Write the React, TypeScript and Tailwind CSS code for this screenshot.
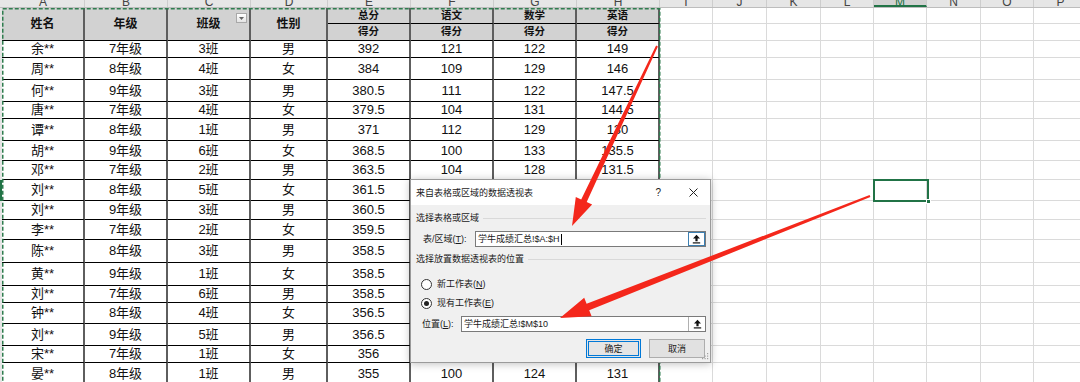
import React from "react";

const COLS = [
  { k: "A", w: "w-[83px]" },
  { k: "B", w: "w-[83px]" },
  { k: "C", w: "w-[83px]" },
  { k: "D", w: "w-[77px]" },
  { k: "E", w: "w-[83px]" },
  { k: "F", w: "w-[83px]" },
  { k: "G", w: "w-[83px]" },
  { k: "H", w: "w-[83px]" },
];
const EXTRA = [
  { k: "I", w: "w-[53px]" },
  { k: "J", w: "w-[54px]" },
  { k: "K", w: "w-[54px]" },
  { k: "L", w: "w-[53px]" },
  { k: "M", w: "w-[53px]" },
  { k: "N", w: "w-[54px]" },
  { k: "O", w: "w-[53px]" },
  { k: "P", w: "w-[54px]" },
];

type Row = { h: string; v: string[] };
const ROWS: Row[] = [
  { h: "h-[17px]", v: ["余**", "7年级", "3班", "男", "392", "121", "122", "149"] },
  { h: "h-[22px]", v: ["周**", "8年级", "4班", "女", "384", "109", "129", "146"] },
  { h: "h-[22px]", v: ["何**", "9年级", "3班", "男", "380.5", "111", "122", "147.5"] },
  { h: "h-[17px]", v: ["唐**", "7年级", "4班", "女", "379.5", "104", "131", "144.5"] },
  { h: "h-[22px]", v: ["谭**", "8年级", "1班", "男", "371", "112", "129", "130"] },
  { h: "h-[20px]", v: ["胡**", "9年级", "6班", "女", "368.5", "100", "133", "135.5"] },
  { h: "h-[19px]", v: ["邓**", "7年级", "2班", "男", "363.5", "104", "128", "131.5"] },
  { h: "h-[21px]", v: ["刘**", "8年级", "5班", "女", "361.5", "106", "125", "130.5"] },
  { h: "h-[19px]", v: ["刘**", "9年级", "3班", "男", "360.5", "102", "130", "128.5"] },
  { h: "h-[20px]", v: ["李**", "7年级", "2班", "女", "359.5", "108", "121", "130.5"] },
  { h: "h-[23px]", v: ["陈**", "8年级", "3班", "男", "358.5", "101", "127", "130.5"] },
  { h: "h-[23px]", v: ["黄**", "9年级", "1班", "女", "358.5", "110", "119", "129.5"] },
  { h: "h-[17px]", v: ["刘**", "7年级", "6班", "男", "358.5", "99", "131", "128.5"] },
  { h: "h-[21px]", v: ["钟**", "8年级", "4班", "女", "356.5", "107", "120", "129.5"] },
  { h: "h-[22px]", v: ["刘**", "9年级", "5班", "男", "356.5", "103", "126", "127.5"] },
  { h: "h-[17px]", v: ["宋**", "7年级", "1班", "女", "356", "105", "123", "128"] },
  { h: "h-[22px]", v: ["晏**", "8年级", "1班", "男", "355", "100", "124", "131"] },
];

const TBL = "shrink-0 border-r-2 border-r-[#5e5e5e] border-b border-b-black";
const GRID = "shrink-0 border-r border-r-[#dadada] border-b border-b-[#dadada]";

function RefButton({ focused }: { focused?: boolean }) {
  return (
    <div
      className={`w-[17px] h-full shrink-0 flex items-center justify-center bg-white border-l ${
        focused ? "border-[#3c7fb1] border" : "border-l-[#b0b0b0]"
      }`}
    >
      <svg width="9" height="10" viewBox="0 0 9 10">
        <path d="M4.5 0.8 L8 4.6 L5.6 4.6 L5.6 7.2 L3.4 7.2 L3.4 4.6 L1 4.6 Z" fill="#111" />
        <rect x="0.8" y="8.3" width="7.4" height="1.2" fill="#111" />
      </svg>
    </div>
  );
}

function Radio({ checked }: { checked?: boolean }) {
  return (
    <div className="w-[11px] h-[11px] rounded-full border border-[#333] bg-white flex items-center justify-center shrink-0">
      {checked && <div className="w-[5px] h-[5px] rounded-full bg-[#222]" />}
    </div>
  );
}

function Dialog() {
  return (
    <div className="absolute left-[410px] top-[179px] w-[301px] h-[184px] border border-[#9a9a9a] bg-[#f0f0f0] shadow-[0_1px_8px_rgba(0,0,0,0.25)] text-[9px] text-[#1a1a1a] font-['Liberation_Sans','Noto_Sans_CJK_SC',sans-serif]">
      <div className="h-[25px] bg-white flex items-center pl-[5px] pr-[12px]">
        <span className="leading-[12px]">来自表格或区域的数据透视表</span>
        <span className="ml-auto text-[10px] leading-[12px]">?</span>
        <svg className="ml-[28px]" width="9" height="9" viewBox="0 0 9 9">
          <path d="M0.5 0.5 L8.5 8.5 M8.5 0.5 L0.5 8.5" stroke="#222" strokeWidth="1" />
        </svg>
      </div>
      <div className="pl-[5px] pr-[4px]">
        <div className="mt-[7px] h-[12px] flex items-center">
          <span className="leading-[12px]">选择表格或区域</span>
          <div className="flex-1 h-px bg-[#d9d9d9] ml-[4px]" />
        </div>
        <div className="mt-[7px] h-[16px] flex items-center pl-[7px]">
          <span className="w-[52px] leading-[12px]">
            表/区域(<span className="underline">T</span>):
          </span>
          <div className="flex-1 h-full flex border border-[#7a7a7a] bg-white">
            <div className="flex-1 flex items-center pl-[2px] leading-[12px]">
              学牛成绩汇总!$A:$H<span className="w-px h-[11px] bg-black ml-[1px]" />
            </div>
            <RefButton focused />
          </div>
        </div>
        <div className="mt-[6px] h-[12px] flex items-center">
          <span className="leading-[12px]">选择放置数据透视表的位置</span>
          <div className="flex-1 h-px bg-[#d9d9d9] ml-[4px]" />
        </div>
        <div className="mt-[12px] h-[14px] flex items-center pl-[5px] gap-[5px]">
          <Radio />
          <span className="leading-[12px]">
            新工作表(<span className="underline">N</span>)
          </span>
        </div>
        <div className="mt-[5px] h-[14px] flex items-center pl-[5px] gap-[5px]">
          <Radio checked />
          <span className="leading-[12px]">
            现有工作表(<span className="underline">E</span>)
          </span>
        </div>
        <div className="mt-[6px] h-[16px] flex items-center pl-[6px]">
          <span className="w-[39px] leading-[12px]">
            位置(<span className="underline">L</span>):
          </span>
          <div className="flex-1 h-full flex border border-[#7a7a7a] bg-white">
            <div className="flex-1 flex items-center pl-[2px] leading-[12px]">学牛成绩汇总!$M$10</div>
            <RefButton />
          </div>
        </div>
        <div className="mt-[7px] flex justify-end gap-[8px] pr-[1px]">
          <div className="w-[55px] h-[19px] border border-[#0078d7] bg-[#e5e5e5] flex items-center justify-center">
            <div className="w-[51px] h-[15px] border border-[#0078d7] flex items-center justify-center leading-[12px]">
              确定
            </div>
          </div>
          <div className="w-[56px] h-[19px] border border-[#adadad] bg-[#e1e1e1] flex items-center justify-center leading-[12px]">
            取消
          </div>
        </div>
      </div>
      <svg className="absolute right-[1px] bottom-[1px]" width="9" height="9" viewBox="0 0 9 9">
        <rect x="7" y="1" width="1.2" height="1.2" fill="#a0a0a0" />
        <rect x="4.5" y="3.5" width="1.2" height="1.2" fill="#a0a0a0" />
        <rect x="7" y="3.5" width="1.2" height="1.2" fill="#a0a0a0" />
        <rect x="2" y="6" width="1.2" height="1.2" fill="#a0a0a0" />
        <rect x="4.5" y="6" width="1.2" height="1.2" fill="#a0a0a0" />
        <rect x="7" y="6" width="1.2" height="1.2" fill="#a0a0a0" />
      </svg>
    </div>
  );
}

export default function App() {
  return (
    <div className="relative w-[1080px] h-[382px] overflow-hidden bg-white text-[#111] font-['Liberation_Sans','Noto_Sans_CJK_SC',sans-serif]">
      {/* column letters */}
      <div className="flex h-[8px] bg-[#e6e6e6] border-b border-b-[#bdbdbd]">
        <div className="w-[2px] shrink-0" />
        {[...COLS, ...EXTRA].map((c) => (
          <div
            key={c.k}
            className={`${c.w} shrink-0 overflow-hidden border-r border-r-[#cdcdcd] text-center text-[12px] leading-[12px] ${
              c.k === "M" ? "bg-[#d2d2d2] text-[#217346] border-b-2 border-b-[#217346]" : "text-[#444]"
            }`}
          >
            <div className="-mt-[4px]">{c.k}</div>
          </div>
        ))}
      </div>

      {/* header rows */}
      <div className="flex h-[33px]">
        <div className="w-[2px] shrink-0 bg-[#e6e6e6]" />
        {COLS.slice(0, 4).map((c, i) => (
          <div
            key={c.k}
            className={`${c.w} ${TBL} relative bg-[#d2d2d2] flex items-center justify-center font-bold text-[12px]`}
          >
            {["姓名", "年级", "班级", "性别"][i]}
            {c.k === "C" && (
              <div className="absolute right-[2px] top-[5px] w-[11px] h-[10px] border border-[#a8a8a8] bg-gradient-to-b from-white to-[#e4e4e4] flex items-center justify-center">
                <svg width="5" height="3" viewBox="0 0 5 3">
                  <path d="M0 0 L5 0 L2.5 3 Z" fill="#666" />
                </svg>
              </div>
            )}
          </div>
        ))}
        {COLS.slice(4).map((c, i) => (
          <div key={c.k} className={`${c.w} shrink-0 flex flex-col`}>
            <div className={`h-[16px] ${TBL} bg-[#d2d2d2] flex items-center justify-center font-bold text-[10.5px]`}>
              {["总分", "语文", "数学", "英语"][i]}
            </div>
            <div className={`h-[17px] ${TBL} bg-[#d2d2d2] flex items-center justify-center font-bold text-[10.5px]`}>
              得分
            </div>
          </div>
        ))}
        {EXTRA.map((c) => (
          <div key={c.k} className={`${c.w} shrink-0 flex flex-col`}>
            <div className={`h-[16px] ${GRID}`} />
            <div className={`h-[17px] ${GRID}`} />
          </div>
        ))}
      </div>

      {/* data rows */}
      {ROWS.map((r, ri) => (
        <div key={ri} className={`flex ${r.h}`}>
          <div className={`w-[2px] shrink-0 ${ri === 7 ? "bg-[#217346]" : "bg-[#e6e6e6]"}`} />
          {COLS.map((c, ci) => (
            <div
              key={c.k}
              className={`${c.w} ${TBL} flex items-center justify-center text-[13px] leading-[14px]`}
            >
              {r.v[ci]}
            </div>
          ))}
          {EXTRA.map((c) => (
            <div key={c.k} className={`${c.w} ${GRID}`} />
          ))}
        </div>
      ))}

      {/* copy marquee */}
      <svg className="absolute left-0 top-0 pointer-events-none" width="1080" height="382">
        <rect x="2.75" y="8.75" width="657" height="420" fill="none" stroke="#2f7d4f" strokeWidth="1.5" strokeDasharray="4 2" />
      </svg>

      {/* selected cell M10 */}
      <div className="absolute left-[873px] top-[179px] w-[56px] h-[23px] border-2 border-[#217346]">
        <div className="absolute -right-[4px] -bottom-[4px] w-[5px] h-[5px] bg-[#217346] border border-white" />
      </div>

      <Dialog />

      {/* red arrows */}
      <svg className="absolute left-0 top-0 pointer-events-none" width="1080" height="382">
        <polygon
          points="657.9,46.4 586.7,202.0 592.1,204.5 572,226 575.8,196.9 581.2,199.4 656.1,45.6"
          fill="#f4271b"
        />
        <polygon
          points="870.4,196.9 589.2,310.3 591.6,316.3 560,318 584.2,297.7 586.6,303.7 869.6,195.1"
          fill="#f4271b"
        />
      </svg>
    </div>
  );
}
